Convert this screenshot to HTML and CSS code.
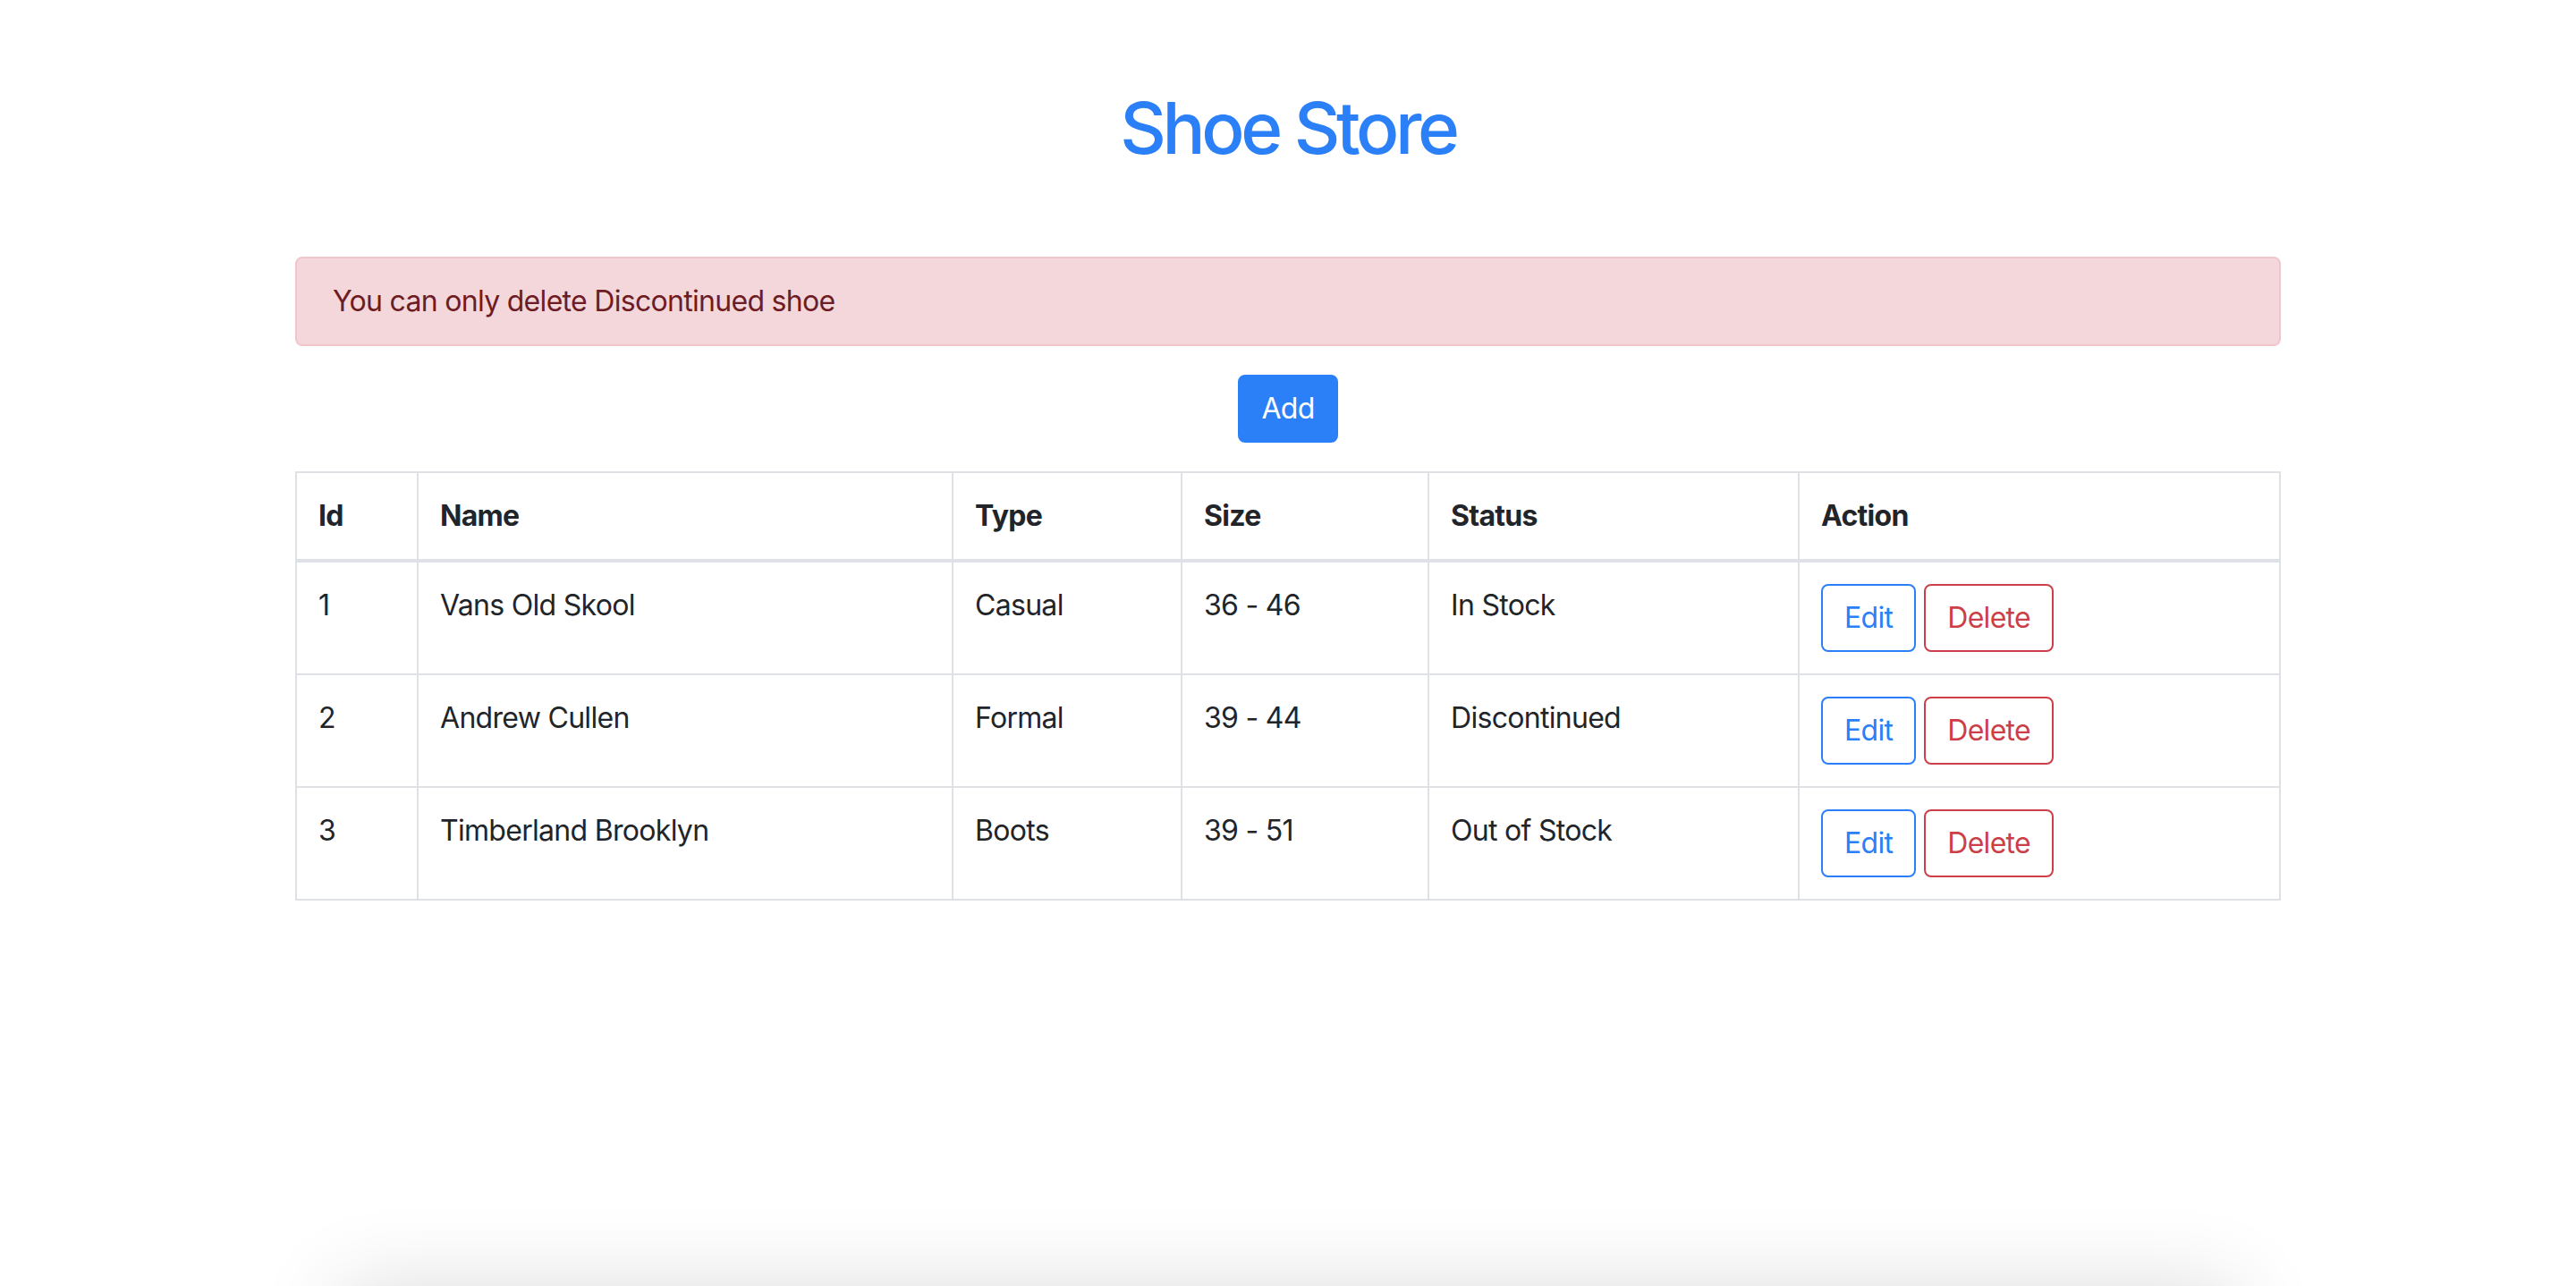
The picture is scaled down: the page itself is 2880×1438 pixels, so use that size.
FILE: index.html
```html
<!DOCTYPE html>
<html lang="en">
<head>
<meta charset="utf-8">
<title>Shoe Store</title>
<link rel="stylesheet" href="styles.css">
</head>
<body>
<div class="container">
  <h1 class="title">Shoe Store</h1>
  <div class="alert">You can only delete Discontinued shoe</div>
  <div class="add-row"><button class="btn btn-primary">Add</button></div>
  <table class="table">
    <colgroup>
      <col class="c-id"><col class="c-name"><col class="c-type"><col class="c-size"><col class="c-status"><col class="c-action">
    </colgroup>
    <thead>
      <tr><th>Id</th><th>Name</th><th>Type</th><th>Size</th><th>Status</th><th>Action</th></tr>
    </thead>
    <tbody>
      <tr>
        <td>1</td><td>Vans Old Skool</td><td>Casual</td><td>36 - 46</td><td>In Stock</td>
        <td><div class="actions"><button class="btn btn-outline-primary">Edit</button><button class="btn btn-outline-danger">Delete</button></div></td>
      </tr>
      <tr>
        <td>2</td><td>Andrew Cullen</td><td>Formal</td><td>39 - 44</td><td>Discontinued</td>
        <td><div class="actions"><button class="btn btn-outline-primary">Edit</button><button class="btn btn-outline-danger">Delete</button></div></td>
      </tr>
      <tr>
        <td>3</td><td>Timberland Brooklyn</td><td>Boots</td><td>39 - 51</td><td>Out of Stock</td>
        <td><div class="actions"><button class="btn btn-outline-primary">Edit</button><button class="btn btn-outline-danger">Delete</button></div></td>
      </tr>
    </tbody>
  </table>
</div>
<div class="below-card"></div>
</body>
</html>
```
FILE: styles.css
```css
* { box-sizing: border-box; }
html, body { margin: 0; padding: 0; }
body {
  font-family: Inter, "Liberation Sans", Arial, sans-serif;
  font-size: 32px;
  line-height: 48px;
  letter-spacing: -0.7px;
  color: #212529;
  background: #fff;
  overflow: hidden;
  height: 1438px;
}
.container {
  width: 2220px;
  margin: 0 auto;
}
.title {
  margin: 95px 0 96px;
  font-size: 80px;
  line-height: 96px;
  font-weight: 500;
  text-align: center;
  color: #2b80f8;
  letter-spacing: -4.4px;
}
.alert {
  background: #f3d7da;
  border: 2px solid #f0c6cb;
  color: #6e1c24;
  border-radius: 8px;
  padding: 24px 40px;
  margin-bottom: 32px;
}
.add-row {
  text-align: center;
  margin-bottom: 32px;
}
.btn {
  display: inline-block;
  font-family: inherit;
  font-size: 32px;
  line-height: 48px;
  letter-spacing: -0.7px;
  padding: 12px 24px;
  border: 2px solid transparent;
  border-radius: 8px;
  background: transparent;
  cursor: pointer;
}
.btn-primary {
  background: #2b80f8;
  border-color: #2b80f8;
  color: #fff;
}
.btn-outline-primary {
  color: #2b80f8;
  border-color: #2b80f8;
}
.btn-outline-danger {
  color: #cc3f48;
  border-color: #cc3f48;
}
.table {
  width: 2220px;
  border-collapse: collapse;
  table-layout: fixed;
  margin-bottom: 32px;
}
.c-id { width: 136px; }
.c-name { width: 598px; }
.c-type { width: 256px; }
.c-size { width: 276px; }
.c-status { width: 414px; }
.table th, .table td {
  border: 2px solid #dee2e6;
  padding: 24px;
  text-align: left;
  vertical-align: top;
}
.table th { font-weight: 700; }
.table thead th { border-bottom-width: 4px; }
.actions {
  display: flex;
  gap: 9px;
}
.below-card {
  position: fixed;
  left: 380px;
  right: 380px;
  top: 1440px;
  height: 400px;
  background: #fff;
  box-shadow: 0 0 90px rgba(0, 0, 0, 0.14);
}
```
